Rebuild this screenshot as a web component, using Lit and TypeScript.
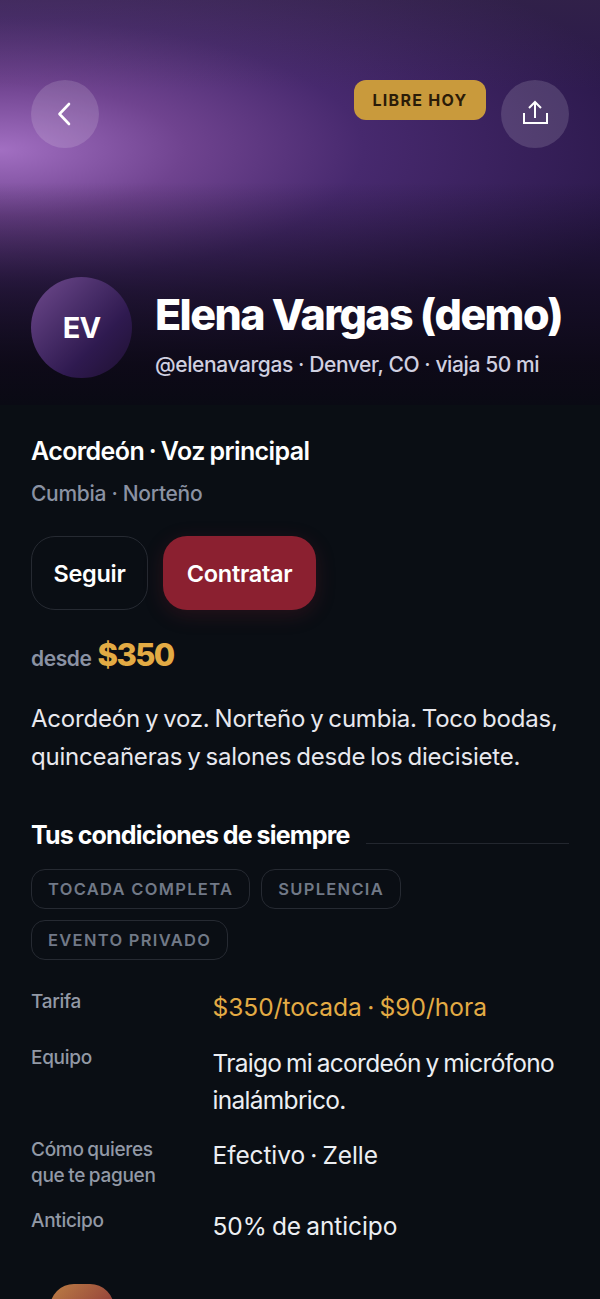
import { LitElement, html, css } from "lit";
import { customElement } from "lit/decorators.js";

const terms = [
  { label: "Tarifa", value: "$350/tocada · $90/hora", kind: "gold" },
  { label: "Equipo", value: "Traigo mi acordeón y micrófono inalámbrico.", kind: "tight" },
  { label: "Cómo quieres que te paguen", value: "Efectivo · Zelle", kind: "" },
  { label: "Anticipo", value: "50% de anticipo", kind: "" },
];

@customElement("app-root")
export default class AppRoot extends LitElement {
  static styles = css`
    :host {
      display: block;
      height: 1299px;
      overflow: hidden;
      background: #0a0e14;
      color: #fff;
      font-family: Inter, "Liberation Sans", sans-serif;
    }
    .hero {
      height: 405px;
      box-sizing: border-box;
      padding: 80px 31px 27px;
      display: flex;
      flex-direction: column;
      justify-content: space-between;
      background:
        linear-gradient(180deg, rgba(10, 8, 18, 0) 45%, rgba(10, 8, 18, 0.62) 72%, rgba(10, 8, 18, 0.9) 90%, #0a0a14 100%),
        linear-gradient(180deg, rgba(70, 60, 70, 0.24) 0%, rgba(70, 60, 70, 0) 22%),
        radial-gradient(ellipse 660px 240px at 0 150px, #a26fc2 0%, #6f438f 28%, #47296e 55%, #2a184a 100%),
        #22123a;
    }
    .top {
      display: flex;
      align-items: flex-start;
    }
    .round {
      width: 68px;
      height: 68px;
      border-radius: 50%;
      background: rgba(255, 255, 255, 0.14);
      display: flex;
      align-items: center;
      justify-content: center;
    }
    .badge {
      margin-left: auto;
      margin-right: 15px;
      height: 40px;
      width: 132px;
      border-radius: 12px;
      background: #c99a3c;
      color: #2b1c08;
      font-size: 16px;
      font-weight: 700;
      letter-spacing: 1.3px;
      display: flex;
      align-items: center;
      justify-content: center;
    }
    .who {
      display: flex;
      align-items: flex-end;
      gap: 23px;
    }
    .avatar {
      width: 101px;
      height: 101px;
      border-radius: 50%;
      flex: none;
      align-self: center;
      background: linear-gradient(135deg, #6f4a8e 0%, #2f1a50 65%, #1e1030 100%);
      display: flex;
      align-items: center;
      justify-content: center;
      font-size: 29px;
      font-weight: 700;
      letter-spacing: -1px;
    }
    h1 {
      margin: 0;
      font-size: 43px;
      line-height: 52px;
      font-weight: 800;
      letter-spacing: -1.6px;
      white-space: nowrap;
    }
    .sub {
      margin-top: 12px;
      font-size: 21px;
      line-height: 26px;
      letter-spacing: -0.4px;
      color: #d0d0e0;
      font-weight: 500;
      white-space: nowrap;
    }
    .body {
      padding: 28px 31px 0;
    }
    .role {
      font-size: 25px;
      line-height: 36px;
      font-weight: 600;
      letter-spacing: -0.6px;
      word-spacing: -1px;
    }
    .genres {
      margin-top: 10px;
      font-size: 21px;
      line-height: 30px;
      letter-spacing: -0.3px;
      font-weight: 500;
      color: #8a92a3;
    }
    .actions {
      margin-top: 27px;
      display: flex;
      gap: 15px;
    }
    .btn {
      height: 74px;
      box-sizing: border-box;
      border-radius: 24px;
      display: flex;
      align-items: center;
      justify-content: center;
      font-size: 23.5px;
      font-weight: 600;
      letter-spacing: -0.3px;
    }
    .follow {
      width: 117px;
      border: 1.5px solid #262a32;
    }
    .hire {
      width: 153px;
      background: #8b2030;
      box-shadow: 0 5px 20px rgba(139, 32, 48, 0.22);
    }
    .price {
      margin-top: 26px;
      display: flex;
      align-items: baseline;
      gap: 6px;
      height: 44px;
      font-size: 21px;
      font-weight: 600;
      letter-spacing: -0.4px;
      color: #8a92a3;
    }
    .price b {
      font-size: 31px;
      font-weight: 800;
      letter-spacing: -1.6px;
      color: #e3ab44;
    }
    .bio {
      margin: 20px 0 0;
      font-size: 24px;
      line-height: 38px;
      letter-spacing: -0.2px;
      word-spacing: -1.6px;
      color: #e8e8ee;
    }
    .section-head {
      margin-top: 40px;
      display: flex;
      align-items: center;
      gap: 16px;
      font-size: 25px;
      line-height: 38px;
      font-weight: 700;
      letter-spacing: -0.8px;
      word-spacing: -0.5px;
      white-space: nowrap;
    }
    .section-head i {
      flex: 1;
      height: 1px;
      margin-top: 16px;
      background: #23272f;
    }
    .chips {
      margin-top: 15px;
      display: flex;
      flex-wrap: wrap;
      gap: 11px;
    }
    .chip {
      height: 40px;
      box-sizing: border-box;
      padding: 0 16px;
      border: 1.5px solid #262a32;
      border-radius: 14px;
      display: flex;
      align-items: center;
      font-size: 16.5px;
      font-weight: 600;
      letter-spacing: 1.3px;
      color: #717987;
    }
    .terms {
      margin-top: 29px;
      display: grid;
      grid-template-columns: 181.5px 1fr;
      row-gap: 18.7px;
    }
    .label {
      font-size: 19px;
      line-height: 26px;
      font-weight: 500;
      letter-spacing: -0.3px;
      word-spacing: -1px;
      color: #9299a6;
      padding-right: 30px;
    }
    .value {
      font-size: 24.5px;
      line-height: 37px;
      letter-spacing: -0.1px;
      word-spacing: -1.5px;
      color: #eceef2;
    }
    .value.gold {
      color: #e3ab44;
      letter-spacing: 0;
    }
    .value.tight {
      letter-spacing: -0.7px;
    }
    .thumb {
      margin: 39px 0 0 19px;
      width: 64px;
      height: 64px;
      border-radius: 24px;
      background: linear-gradient(135deg, #bd7f45, #7e2035);
    }
  `;

  render() {
    return html`
      <section class="hero">
        <div class="top">
          <div class="round">
            <svg width="30" height="30" viewBox="0 0 30 30" fill="none" stroke="#fff" stroke-width="2.6" stroke-linecap="round" stroke-linejoin="round">
              <path d="M19 5 L9.5 15 L19 25" />
            </svg>
          </div>
          <div class="badge">LIBRE HOY</div>
          <div class="round">
            <svg width="30" height="30" viewBox="0 0 30 30" fill="none" stroke="#fff" stroke-width="2">
              <path d="M15 19 V3.5 M9 9 L15 3 L21 9" />
              <path d="M4 14 V24 H27 V14" />
            </svg>
          </div>
        </div>
        <div class="who">
          <div class="avatar">EV</div>
          <div>
            <h1>Elena Vargas (demo)</h1>
            <div class="sub">@elenavargas · Denver, CO · viaja 50 mi</div>
          </div>
        </div>
      </section>
      <section class="body">
        <div class="role">Acordeón · Voz principal</div>
        <div class="genres">Cumbia · Norteño</div>
        <div class="actions">
          <div class="btn follow">Seguir</div>
          <div class="btn hire">Contratar</div>
        </div>
        <div class="price">desde <b>$350</b></div>
        <p class="bio">Acordeón y voz. Norteño y cumbia. Toco bodas, quinceañeras y salones desde los diecisiete.</p>
        <div class="section-head">Tus condiciones de siempre <i></i></div>
        <div class="chips">
          <span class="chip">TOCADA COMPLETA</span>
          <span class="chip">SUPLENCIA</span>
          <span class="chip">EVENTO PRIVADO</span>
        </div>
        <div class="terms">
          ${terms.map(
            (t) => html`
              <div class="label">${t.label}</div>
              <div class="value ${t.kind}">${t.value}</div>
            `
          )}
        </div>
        <div class="thumb"></div>
      </section>
    `;
  }
}
